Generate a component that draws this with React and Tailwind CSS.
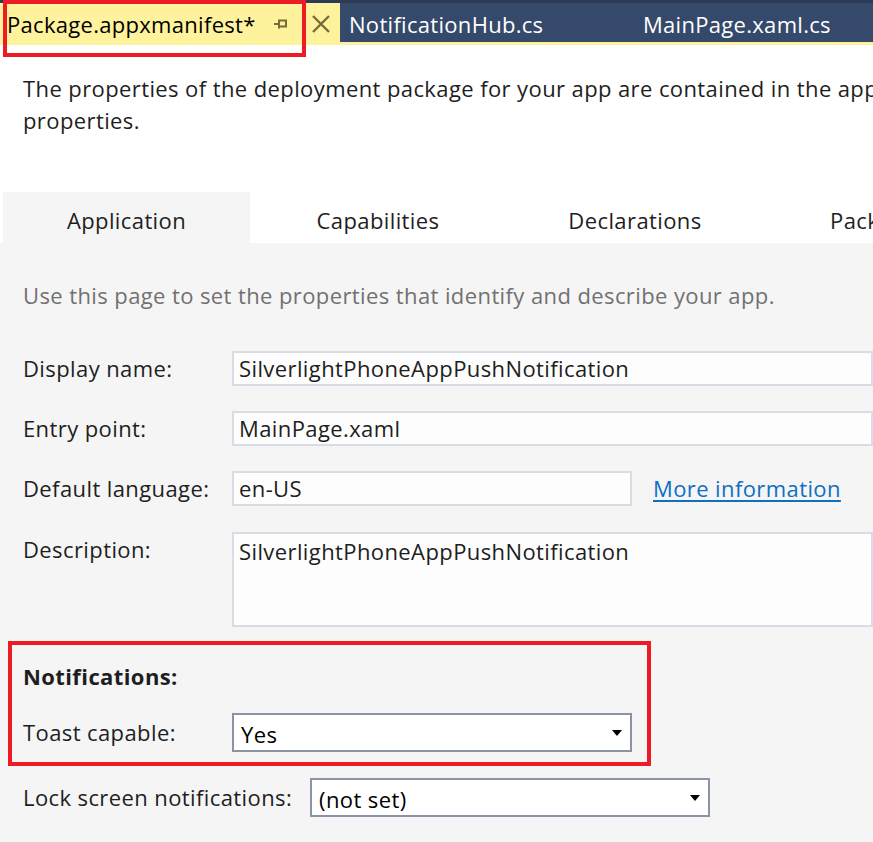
import React from 'react'

const FONT = "font-['Segoe_UI','Open_Sans','Noto_Sans',sans-serif]"

function TextBox({ value, className = '' }) {
  return (
    <div className={`h-[35px] border-2 border-[#d9dbe5] bg-[#fdfdfd] pl-[5px] flex items-center text-[22px] tracking-[0.4px] text-[#1e1e1e] whitespace-nowrap overflow-hidden ${className}`}>
      {value}
    </div>
  )
}

function Select({ value, className = '' }) {
  return (
    <div className={`h-[39px] w-[400px] border-2 border-[#8b94a6] bg-white pl-[7px] pr-[8px] flex items-center justify-between text-[22px] tracking-[0.4px] text-black ${className}`}>
      <span className="pt-[3px]">{value}</span>
      <span className="w-0 h-0 border-l-[5px] border-r-[5px] border-t-[6px] border-l-transparent border-r-transparent border-t-black" />
    </div>
  )
}

function Row({ label, children, className = '' }) {
  return (
    <div className={`flex items-center ${className}`}>
      <div className="w-[209px] shrink-0 text-[22px] tracking-[0.4px] text-[#1e1e1e] whitespace-nowrap">{label}</div>
      {children}
    </div>
  )
}

export default function App() {
  return (
    <div className={`relative w-[873px] h-[842px] overflow-hidden bg-[#f5f5f5] ${FONT}`}>
      {/* document tab strip */}
      <div className="h-[45px] bg-[#fff29d] flex flex-col">
        <div className="h-[42px] flex bg-[#35496b] border-t-[3px] border-[#2c3a56]">
          <div className="w-[340px] shrink-0 bg-[#fff29d] flex items-center pl-[7px] pt-[3px] text-[22px] tracking-[0.3px] text-black">
            <span className="w-[266px] shrink-0 whitespace-nowrap">Package.appxmanifest*</span>
            <svg width="16" height="14" viewBox="0 0 16 14" className="shrink-0">
              <path d="M1 7h5M6 2.5v9M6 3.5h7v6H6" fill="none" stroke="#7b6b38" strokeWidth="2" />
            </svg>
            <svg width="20" height="20" viewBox="0 0 20 20" className="ml-[22px] shrink-0">
              <path d="M2 2L18 18M18 2L2 18" stroke="#7b6b38" strokeWidth="2.4" />
            </svg>
          </div>
          <div className="w-[300px] shrink-0 flex items-center pl-[9px] pt-[3px] text-[22px] tracking-[0.3px] text-white whitespace-nowrap">NotificationHub.cs</div>
          <div className="flex items-center pl-[3px] pt-[3px] text-[22px] tracking-[0.3px] text-white whitespace-nowrap">MainPage.xaml.cs</div>
        </div>
      </div>

      {/* intro */}
      <div className="h-[147px] bg-white pl-[23px] pt-[27px] text-[22px] tracking-[0.4px] leading-[32px] text-[#1e1e1e] overflow-hidden">
        <p className="whitespace-nowrap">The properties of the deployment package for your app are contained in the app manifest</p>
        <p>properties.</p>
      </div>

      {/* page tabs */}
      <div className="h-[51px] bg-white flex text-[22px] tracking-[0.4px] text-[#1e1e1e] whitespace-nowrap overflow-hidden">
        <div className="ml-[3px] w-[247px] shrink-0 bg-[#f5f5f5] flex items-center justify-center pt-[6px]">Application</div>
        <div className="w-[256px] shrink-0 flex items-center justify-center pt-[6px]">Capabilities</div>
        <div className="w-[258px] shrink-0 flex items-center justify-center pt-[6px]">Declarations</div>
        <div className="shrink-0 flex items-center pl-[66px] pt-[6px]">Packaging</div>
      </div>

      {/* application panel */}
      <div className="pt-[38px]">
        <p className="pl-[23px] text-[22px] tracking-[0.4px] text-[#717171] leading-[28px] whitespace-nowrap">Use this page to set the properties that identify and describe your app.</p>

        <div className="pl-[23px] mt-[42px] flex flex-col">
          <Row label="Display name:">
            <TextBox value="SilverlightPhoneAppPushNotification" className="w-[660px]" />
          </Row>
          <Row label="Entry point:" className="mt-[25px]">
            <TextBox value="MainPage.xaml" className="w-[660px]" />
          </Row>
          <Row label="Default language:" className="mt-[25px]">
            <TextBox value="en-US" className="w-[400px]" />
            <a className="ml-[21px] text-[22px] tracking-[0.4px] text-[#0e70c0] underline underline-offset-[3px] whitespace-nowrap">More information</a>
          </Row>
          <div className="flex items-start mt-[26px]">
            <div className="w-[209px] shrink-0 text-[22px] tracking-[0.4px] text-[#1e1e1e] pt-[1px]">Description:</div>
            <div className="h-[95px] w-[660px] border-2 border-[#d9dbe5] bg-[#fdfdfd] pl-[5px] pt-[1px] text-[22px] tracking-[0.4px] text-[#1e1e1e] whitespace-nowrap">
              SilverlightPhoneAppPushNotification
            </div>
          </div>
        </div>

        {/* notifications */}
        <div className="ml-[8px] mt-[14px] w-[643px] h-[125px] border-4 border-[#ed1c24] pl-[11px] pt-[16px]">
          <p className="text-[22px] tracking-[0.4px] font-bold text-[#1e1e1e] leading-[30px]">Notifications:</p>
          <div className="flex items-center mt-[22px]">
            <div className="w-[209px] shrink-0 text-[22px] tracking-[0.4px] text-[#1e1e1e]">Toast capable:</div>
            <Select value="Yes" />
          </div>
        </div>

        <div className="pl-[23px] mt-[12px] flex items-center">
          <div className="w-[287px] shrink-0 text-[22px] tracking-[0.4px] text-[#1e1e1e] whitespace-nowrap">Lock screen notifications:</div>
          <Select value="(not set)" />
        </div>
      </div>

      {/* highlight around active document tab */}
      <div className="absolute left-[3px] top-0 w-[303px] h-[57px] border-4 border-[#ed1c24] pointer-events-none" />
    </div>
  )
}
